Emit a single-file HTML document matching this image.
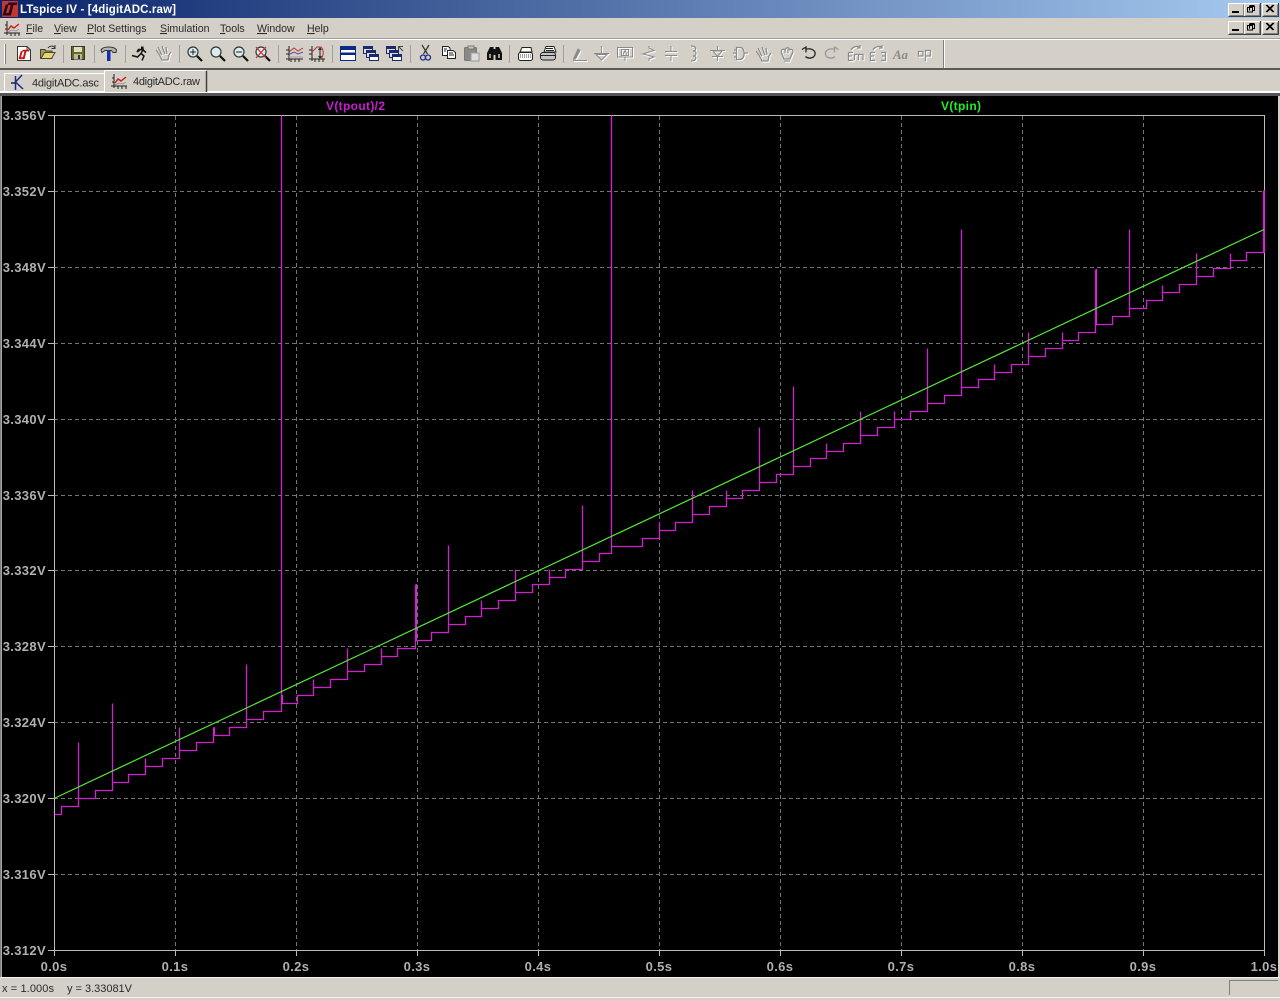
<!DOCTYPE html>
<html><head><meta charset="utf-8"><title>LTspice IV - [4digitADC.raw]</title>
<style>
html,body{margin:0;padding:0;background:#d4d0c8;overflow:hidden}
svg{display:block;position:absolute;left:0;top:0}
.u{font-family:"Liberation Sans",sans-serif;font-size:11px;fill:#2a2a2a}
.m{font-family:"Liberation Sans",sans-serif;font-size:10.6px;fill:#2a2a2a}
.ax{font-family:"Liberation Sans",sans-serif;font-size:13px;font-weight:bold;fill:#b0b0b0;letter-spacing:.35px}
.tr{font-family:"Liberation Sans",sans-serif;font-size:12px;font-weight:bold}
.ul{text-decoration:underline}
.w{color:#fff}.g{color:#8a8a8a}
</style></head><body>
<svg width="1280" height="1000" viewBox="0 0 1280 1000" xmlns="http://www.w3.org/2000/svg">
<defs>
<linearGradient id="tb" x1="0" x2="1" y1="0" y2="0"><stop offset="0" stop-color="#0a246a"/><stop offset="1" stop-color="#a6caf0"/></linearGradient>
<g id="btn"><rect width="16" height="13" fill="#d4d0c8"/><path d="M.5 12.5V.5H15.5" stroke="#fff" fill="none"/><path d="M.5 13.5H16.5V0" stroke="#404040" fill="none"/><path d="M1.5 12.5H15.5V1.5" stroke="#808080" fill="none"/></g>
<g id="wave"><path d="M3 1V15M0 13H16M1 5H3M1 9H3M7 13V16M11 13V16M15 13V16" stroke="#222" fill="none"/><path d="M4 10L7 6L10 8L15 4" stroke="#d01818" stroke-width="1.4" fill="none"/><path d="M4 12L8 10L12 11L15 9" stroke="#999" fill="none"/></g>
<g id="mag"><circle cx="6" cy="6" r="5" fill="#dcecec" stroke="#2a3a3a" stroke-width="1.2"/><path d="M10 10L15 15" stroke="#111" stroke-width="2.2"/></g>
<g id="tile"><rect x=".5" y=".5" width="15" height="14" fill="#fff" stroke="#0a2a8a"/><rect x="1" y="1" width="14" height="3" fill="#0a2a8a"/><rect x="1" y="6.500" width="14" height="2.500" fill="#0a2a8a"/></g>
<g id="casc"><rect x=".5" y=".5" width="9" height="7" fill="#dde" stroke="#1a2a6a"/><rect x="3.5" y="4.5" width="9" height="7" fill="#dde" stroke="#1a2a6a"/><rect x="6.5" y="8.5" width="9" height="6" fill="#fff" stroke="#1a2a6a"/><rect x="1" y="1" width="8" height="2" fill="#1a2a6a"/><rect x="4" y="5" width="8" height="2" fill="#1a2a6a"/><rect x="7" y="9" width="8" height="2" fill="#1a2a6a"/></g>
<g id="d1" fill="none" stroke="currentColor"><path d="M1.500 13L6 3L8 4.500L3.500 13Z" fill="currentColor"/><path d="M1 14.500H15"/></g>
<g id="d2" fill="none" stroke="currentColor"><path d="M7.500 0V7M0 7.500H15M2 8.500H13L7.500 14Z"/></g>
<g id="d3" fill="none" stroke="currentColor"><rect x=".5" y=".5" width="15" height="9.500"/><rect x="4.500" y="2.500" width="7" height="6"/><path d="M6 7.500L8 3.500L10 7.500M8 10V14"/></g>
<g id="d4" fill="none" stroke="currentColor"><path d="M7 0V2L12 4.500L1 8L12 11L7 13V15"/></g>
<g id="d5" fill="none" stroke="currentColor"><path d="M6 0V5.500M0 5.500H12M0 9.500H12M6 10V15"/></g>
<g id="d6" fill="none" stroke="currentColor" stroke-width="1.200"><path d="M1 0C7 0 7 5 3 5C7 5 7 10 3 10C7 10 7 15 1 15"/></g>
<g id="d7" fill="none" stroke="currentColor"><path d="M7.500 0V4M0 4.500H15M3 5H12L7.500 10.500ZM2 10.500H13M7.500 11V15"/></g>
<g id="d8" fill="none" stroke="currentColor" stroke-width="1.300"><path d="M0 6H3M3.500 .5V12.500H7C12.500 12.500 12.500 .5 7 .5ZM11.500 6H15M1 3H3M1 10H3"/></g>
<g id="d9" fill="none" stroke="currentColor" stroke-width="1.200"><path d="M4 9L1 5M6 8L3 2M9 7L7 1M12 8L11 2M13 11L16 7M4 9L7 15H13L14 10M7 10L5 7M10 9L8 4M12 9L11 4"/></g>
<g id="d10" fill="none" stroke="currentColor" stroke-width="1.200"><path d="M2 7C0 3 3 1 5 3C6 0 9 0 10 3C12 1 14 4 12 7L10 12H4L2 7ZM4 14H10M5 3V6M8 2V6"/></g>
<g id="d13" fill="none" stroke="currentColor" stroke-width="1.200"><path d="M.5 7.500V15.500H5M.5 7.500H5M.5 11H4M6.500 15V9.500H15V15M10.500 10V15M3 5C5 1 10 1 12 2M12 0V3H9"/></g>
<g id="d14" fill="none" stroke="currentColor" stroke-width="1.200"><path d="M.5 7.500V15.500H5M.5 7.500H5M.5 11H4M11 7.500H15.500V15.500H11M15 11H12M3 5C5 1 10 1 12 2M12 0V3H9"/></g>
<g id="d16" fill="none" stroke="currentColor" stroke-width="1.200"><path d="M.5 2.500H5V7H.5ZM7.500 12V1.500H12.500V7H8"/></g>
<g id="lt"><path d="M0 14L3.200 3H6L3.500 11.500H7L6.300 14ZM5 3.500L5.800 1H15L14.200 3.500H11L8.400 14H5.500L8.200 3.500Z"/></g>
</defs>

<!-- title bar -->
<rect x="0" y="0" width="1280" height="18" fill="url(#tb)"/>
<rect x="2" y="1" width="16" height="16" fill="#c23636"/>
<use href="#lt" x="2.500" y="1.500" fill="#2c0a16"/>
<text x="20" y="13" font-family="Liberation Sans,sans-serif" font-size="11.5" font-weight="bold" fill="#fff" textLength="156">LTspice IV - [4digitADC.raw]</text>
<use href="#btn" x="1228" y="3"/><use href="#btn" x="1244" y="3"/><use href="#btn" x="1262" y="3"/>
<use href="#btn" x="1228" y="21"/><use href="#btn" x="1244" y="21"/><use href="#btn" x="1262" y="21"/>
<g fill="none" stroke="#000">
<path d="M1232 12.500h7M1232 11.500h7"/><path d="M1249.500 10.500v-4h5v4h-2M1247.500 7.500h5v4.500h-5zM1249.500 5.500h5"/><path d="M1266 5L1273 12M1267 5L1274 12M1273 5L1266 12M1274 5L1267 12"/>
<path d="M1232 30.500h7M1232 29.500h7"/><path d="M1249.500 28.500v-4h5v4h-2M1247.500 25.500h5v4.500h-5zM1249.500 23.500h5"/><path d="M1266 23L1273 30M1267 23L1274 30M1273 23L1266 30M1274 23L1267 30"/>
</g>

<!-- menu -->
<use href="#wave" x="4" y="20"/>
<g class="m">
<text x="26" y="32"><tspan class="ul">F</tspan>ile</text>
<text x="54" y="32"><tspan class="ul">V</tspan>iew</text>
<text x="87" y="32"><tspan class="ul">P</tspan>lot Settings</text>
<text x="160" y="32"><tspan class="ul">S</tspan>imulation</text>
<text x="220" y="32"><tspan class="ul">T</tspan>ools</text>
<text x="257" y="32"><tspan class="ul">W</tspan>indow</text>
<text x="307" y="32"><tspan class="ul">H</tspan>elp</text>
</g>

<!-- toolbar -->
<rect x="0" y="38" width="1280" height="1" fill="#a0a0a0"/>
<rect x="0" y="39" width="1280" height="1" fill="#fff"/>
<rect x="0" y="68" width="1280" height="2" fill="#5a5a5a"/>
<rect x="943" y="40" width="1" height="28" fill="#808080"/><rect x="944" y="40" width="1" height="28" fill="#fff"/>
<rect x="4" y="44" width="1" height="20" fill="#fff"/><rect x="5" y="44" width="1" height="20" fill="#808080"/>
<g fill="#a0a0a0"><rect x="63" y="45" width="1" height="18"/><rect x="94" y="45" width="1" height="18"/><rect x="125" y="45" width="1" height="18"/><rect x="179" y="45" width="1" height="18"/><rect x="278" y="45" width="1" height="18"/><rect x="332" y="45" width="1" height="18"/><rect x="410" y="45" width="1" height="18"/><rect x="509" y="45" width="1" height="18"/><rect x="563" y="45" width="1" height="18"/></g>

<!-- new -->
<path d="M17.500 46.500H27L30.500 50V60.500H17.500Z" fill="#fff" stroke="#333"/><path d="M27 46.500V50H30.500" fill="none" stroke="#333"/>
<use href="#lt" transform="translate(18.500,49) scale(.72)" fill="#c81414"/>
<!-- open -->
<path d="M40.500 49.500H45L46 51H52V58.500H40.500Z" fill="#a89a40" stroke="#444"/><path d="M41 58.500L44.500 52.500H55L51.500 58.500Z" fill="#e6d868" stroke="#444"/><path d="M48 48C50 45.500 53 45.500 54.500 47.500M55 45V48.500H51.500" fill="none" stroke="#333"/>
<!-- save -->
<rect x="71.500" y="46.500" width="13" height="13" fill="#6a6a1c" stroke="#333"/><rect x="74" y="47" width="8" height="5" fill="#dedec8"/><rect x="74" y="54" width="8" height="5.500" fill="#b8b8a0"/><rect x="78" y="55" width="2" height="4" fill="#333"/>
<!-- hammer -->
<path d="M101 50C103 46 114 46 116.500 50L116 52.500H113L111.500 50.500H105L102 52.500Z" fill="#b4b4b4" stroke="#333"/><rect x="107" y="51" width="3.500" height="10" fill="#1030b0"/>
<!-- runner -->
<path d="M141 46.500h2.500v2.500h-2.500z" fill="#111"/><path d="M140 50L137 52L138.500 49.500L143 49.500L141 53.500L144 56L142 60.500M141 53.500L137.500 57L132 55.500M143 50L146 52.500" fill="none" stroke="#111" stroke-width="1.500"/>
<!-- hand disabled -->
<g transform="translate(155,45)"><use href="#d9" class="w" x="1" y="1"/><use href="#d9" class="g"/></g>
<!-- zooms -->
<use href="#mag" x="187" y="46"/><path d="M190 52H196M193 49V55" stroke="#222"/>
<use href="#mag" x="210" y="46"/>
<use href="#mag" x="233" y="46"/><path d="M236 52H242" stroke="#222"/>
<use href="#mag" x="255" y="46"/><path d="M256 47L266 58M266 47L256 58" stroke="#d03030" stroke-width="1.300"/>
<!-- waves -->
<g transform="translate(286,46)"><path d="M3 0V15M0 13H17M5 13V16M9 13V16M13 13V16M0 4H3M0 8H3" stroke="#222" fill="none"/><path d="M3 6L8 2L12 5L17 2" stroke="#c03030" fill="none"/><path d="M3 8.500L8 6L12 8L17 6" stroke="#5050a0" fill="none"/><path d="M3 11H17" stroke="#c09090"/></g>
<g transform="translate(309,46)"><path d="M3 0V15M0 13H16M6 13V16M10 13V16M14 13V16M0 4H3M0 8H3" stroke="#222" fill="none"/><path d="M3 6L8 1H12C15 4 15 9 12 13" stroke="#c03030" fill="none"/><path d="M11 2V12M9.500 4L11 2L12.500 4M9.500 10L11 12L12.500 10" stroke="#222" fill="none"/></g>
<!-- tile -->
<use href="#tile" x="340" y="46"/><use href="#casc" x="363" y="46"/><use href="#casc" x="386" y="46"/><path d="M398 46.500H403M398.500 46.500V50M398.500 46.500L403 51" stroke="#444" fill="none"/>
<!-- scissors -->
<path d="M422 45L427.500 54M429 45L423.500 54" stroke="#333" fill="none" stroke-width="1.200"/><circle cx="423" cy="57.500" r="2.500" fill="none" stroke="#1a2a8a" stroke-width="1.300"/><circle cx="428" cy="57.500" r="2.500" fill="none" stroke="#1a2a8a" stroke-width="1.300"/>
<!-- copy -->
<path d="M442.500 46.500H448L450 48V55.500H442.500Z" fill="#fff" stroke="#222"/><path d="M447.500 50.500H453L455.500 52.500V58.500H447.500Z" fill="#fff" stroke="#222"/><path d="M449 53H453M449 55H454M444 49H447M444 51H446" stroke="#222"/>
<!-- paste -->
<rect x="464.500" y="47.500" width="12" height="13" rx="1" fill="#8a8a82" stroke="#777"/><rect x="468" y="46" width="6" height="3" fill="#c8c8c0" stroke="#777"/><rect x="471" y="53" width="8" height="8" fill="#ddd" stroke="#999"/>
<!-- binoculars -->
<path d="M487 60V53L490 47H493.500V60ZM495.500 60V47H499L502 53V60Z" fill="#111"/><rect x="493" y="49" width="3" height="6" fill="#111"/><rect x="489" y="54" width="2" height="4" fill="#999"/><rect x="498" y="54" width="2" height="4" fill="#999"/>
<!-- preview -->
<path d="M520 52L522 47.500H531L532 52Z" fill="#fff" stroke="#222"/><rect x="518.500" y="52.500" width="14" height="8" rx="2" fill="#fff" stroke="#222"/><path d="M520 55H531M520 57H531" stroke="#444" stroke-dasharray="1 1"/>
<!-- print -->
<path d="M544 52L546 46.500H554L556 52Z" fill="#fff" stroke="#222"/><path d="M546 48.500H553M546 50.500H554" stroke="#222"/><rect x="540.500" y="52.500" width="15" height="7.500" rx="2.500" fill="#c4c4c4" stroke="#222"/><path d="M541 55.500H555" stroke="#222"/>
<!-- disabled set -->
<use href="#d1" class="w" x="573" y="47"/><use href="#d1" class="g" x="572" y="46"/>
<use href="#d2" class="w" x="595" y="47"/><use href="#d2" class="g" x="594" y="46"/>
<use href="#d3" class="w" x="618" y="48"/><use href="#d3" class="g" x="617" y="47"/>
<use href="#d4" class="w" x="643" y="47"/><use href="#d4" class="g" x="642" y="46"/>
<use href="#d5" class="w" x="666" y="47"/><use href="#d5" class="g" x="665" y="46"/>
<use href="#d6" class="w" x="691" y="47"/><use href="#d6" class="g" x="690" y="46"/>
<use href="#d7" class="w" x="711" y="47"/><use href="#d7" class="g" x="710" y="46"/>
<use href="#d8" class="w" x="734" y="48"/><use href="#d8" class="g" x="733" y="47"/>
<use href="#d9" class="w" x="756" y="47"/><use href="#d9" class="g" x="755" y="46"/>
<use href="#d10" class="w" x="781" y="48"/><use href="#d10" class="g" x="780" y="47"/>
<path d="M802 49.500L806 47V52.500M805.500 49.500C810 47.500 816 50 815 54.500C814 58.500 808 59 805.500 56.500" fill="none" stroke="#222" stroke-width="1.300"/>
<path d="M838.500 49.500L834.500 47V52.500M835 49.500C830.500 47.500 824.500 50 825.500 54.500C826.500 58.500 832.500 59 835 56.500" fill="none" stroke="#999" stroke-width="1.300"/>
<use href="#d13" class="w" x="849" y="46"/><use href="#d13" class="g" x="848" y="45"/>
<use href="#d14" class="w" x="871" y="46"/><use href="#d14" class="g" x="870" y="45"/>
<text x="893" y="59" font-family="Liberation Serif,serif" font-style="italic" font-weight="bold" font-size="13" fill="#8a8a8a" textLength="15">Aa</text>
<use href="#d16" class="w" x="919" y="50"/><use href="#d16" class="g" x="918" y="49"/>

<!-- tabs -->
<rect x="0" y="91" width="1280" height="2" fill="#fff"/>
<rect x="0" y="93" width="1280" height="3" fill="#555"/>
<path d="M4.500 91V73.500H104" fill="none" stroke="#fff"/>
<rect x="104" y="70" width="103" height="22" fill="#d4d0c8"/>
<path d="M104.500 92V70.500H206" fill="none" stroke="#fff"/><path d="M206.500 71V92" stroke="#404040" stroke-width="1.500"/>
<g fill="none" stroke="#1a2a8a" stroke-width="1.500"><path d="M15.500 76V90M22 75L15.500 82L23 89"/><path d="M11 83H15" stroke="#222"/></g>
<use href="#wave" x="111" y="73"/>
<text class="u" x="32" y="86.500" textLength="67">4digitADC.asc</text>
<text class="u" x="133" y="85" textLength="67">4digitADC.raw</text>

<!-- plot -->
<rect x="2" y="96" width="1276" height="881" fill="#000"/>
<rect x="0" y="96" width="1.500" height="881" fill="#808080"/>
<g stroke="#747474" stroke-dasharray="4 3" fill="none">
<path d="M54 191.500H1264M54 267.500H1264M54 343.500H1264M54 419.500H1264M54 495.500H1264M54 570.500H1264M54 646.500H1264M54 722.500H1264M54 798.500H1264M54 874.500H1264"/>
<path d="M175.500 116V950M296.500 116V950M417.500 116V950M538.500 116V950M659.500 116V950M780.500 116V950M901.500 116V950M1022.500 116V950M1143.500 116V950"/>
</g>
<rect x="54.500" y="115.500" width="1210" height="835" fill="none" stroke="#bcbcbc"/>
<path d="M48 115.500H54M48 191.500H54M48 267.500H54M48 343.500H54M48 419.500H54M48 495.500H54M48 570.500H54M48 646.500H54M48 722.500H54M48 798.500H54M48 874.500H54M48 950.500H54M54.500 951V956M175.500 951V956M296.500 951V956M417.500 951V956M538.500 951V956M659.500 951V956M780.500 951V956M901.500 951V956M1022.500 951V956M1143.500 951V956M1264.500 951V956" stroke="#bcbcbc"/>

<path fill="none" stroke="#d020d0" stroke-width="1.300" d="M54.500 814.500H61.500V806.500H78.500V742.500V798.500H95.500V790.500H112.500V703.500V782.500H128.500V774.500H145.500V758.500V766.500H162.500V758.500H179.500V727.500V750.500H196.500V742.500H213.500V727.500V735.500H229.500V727.500H246.500V664.500V719.500H263.500V711.500H281.500V115.500V703.500H297.500V695.500H313.500V679.500V687.500H330.500V679.500H347.500V648.500V671.500H364.500V664.500H381.500V648.500V656.500H397.500V648.500H415.500V584.500V640.500H431.500V632.500H448.500V545.500V624.500H465.500V616.500H481.500V600.500V608.500H498.500V600.500H515.500V569.500V592.500H532.500V584.500H549.500V569.500V577.500H565.500V569.500H582.500V505.500V561.500H599.500V553.500H611.500V115.500V546.500H642.500V538.500H659.500V522.500V530.500H675.500V522.500H692.500V490.500V514.500H709.500V506.500H726.500V490.500V498.500H742.500V490.500H759.500V427.500V482.500H776.500V474.500H793.500V386.500V466.500H810.500V458.500H826.500V443.500V451.500H843.500V443.500H860.500V411.500V435.500H877.500V427.500H894.500V411.500V419.500H910.500V411.500H927.500V348.500V403.500H944.500V395.500H961.500V229.500V387.500H978.500V379.500H994.500V364.500V372.500H1011.500V364.500H1028.500V332.500V356.500H1045.500V348.500H1062.500V332.500V340.500H1078.500V332.500H1095.500V269.500V324.500H1112.500V316.500H1129.500V229.500V308.500H1146.500V300.500H1162.500V285.500V292.500H1179.500V284.500H1196.500V253.500V276.500H1213.500V268.500H1230.500V253.500V260.500H1246.500V252.500H1263.500V190.500"/>
<path stroke="#e020e0" fill="none" d="M416.500 584V640M1096.500 269V324M214.500 727V735M282.500 695V703M1264.500 190V253"/>
<path stroke="#55e838" stroke-width="1.200" fill="none" d="M54 798.500L1264 229.500"/>

<g class="ax" text-anchor="end">
<text x="46" y="120">3.356V</text><text x="46" y="196">3.352V</text><text x="46" y="272">3.348V</text><text x="46" y="348">3.344V</text><text x="46" y="424">3.340V</text><text x="46" y="500">3.336V</text><text x="46" y="575">3.332V</text><text x="46" y="651">3.328V</text><text x="46" y="727">3.324V</text><text x="46" y="803">3.320V</text><text x="46" y="879">3.316V</text><text x="46" y="955">3.312V</text>
</g>
<g class="ax" text-anchor="middle">
<text x="54" y="971">0.0s</text><text x="175" y="971">0.1s</text><text x="296" y="971">0.2s</text><text x="417" y="971">0.3s</text><text x="538" y="971">0.4s</text><text x="659" y="971">0.5s</text><text x="780" y="971">0.6s</text><text x="901" y="971">0.7s</text><text x="1022" y="971">0.8s</text><text x="1143" y="971">0.9s</text><text x="1264" y="971">1.0s</text>
</g>
<text class="tr" x="326" y="110" fill="#c81ed0" textLength="59">V(tpout)/2</text>
<text class="tr" x="941" y="110" fill="#22ee22" textLength="40">V(tpin)</text>

<!-- status -->
<rect x="0" y="977" width="1280" height="1" fill="#f4f2ee"/>
<rect x="0" y="997" width="1280" height="1" fill="#f4f2ee"/>
<text class="u" x="2" y="992" textLength="52">x = 1.000s</text>
<text class="u" x="67" y="992" textLength="65">y = 3.33081V</text>
<path d="M1229.500 995V980.500H1278" fill="none" stroke="#808080"/>
</svg>
</body></html>
